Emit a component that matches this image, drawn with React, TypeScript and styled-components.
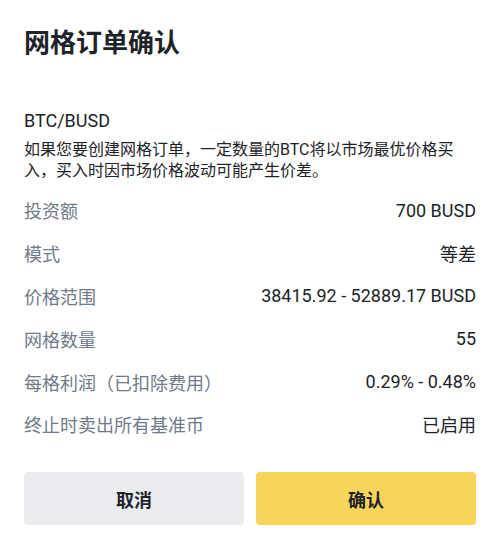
import styled, { createGlobalStyle } from 'styled-components';

const GlobalStyle = createGlobalStyle`
  html, body {
    margin: 0;
    padding: 0;
    background: #ffffff;
  }
  body {
    font-family: Roboto, "Noto Sans CJK SC", "Noto Sans", sans-serif;
    color: #1e2329;
  }
`;

const Panel = styled.div`
  width: 500px;
  height: 549px;
  box-sizing: border-box;
  padding: 24px;
  display: flex;
  flex-direction: column;
`;

const Title = styled.h1`
  margin: 0;
  font-size: 26px;
  line-height: 38px;
  font-weight: 700;
  color: #1e2329;
`;

const Pair = styled.div`
  margin-top: 47px;
  font-size: 18px;
  line-height: 24px;
  color: #1e2329;
`;

const Notice = styled.p`
  margin: 6px 0 0;
  font-size: 16px;
  line-height: 21px;
  color: #1e2329;
`;

const List = styled.div`
  margin-top: 8px;
  display: flex;
  flex-direction: column;
`;

const Row = styled.div`
  height: 42.8px;
  display: flex;
  align-items: center;
  justify-content: space-between;
  font-size: 18px;
`;

const Label = styled.span`
  color: #707a8a;
`;

const Value = styled.span`
  color: #1e2329;
`;

const Actions = styled.div`
  margin-top: auto;
  display: grid;
  grid-template-columns: 1fr 1fr;
  gap: 12px;
`;

const Button = styled.button<{ $primary?: boolean }>`
  height: 53px;
  border: none;
  border-radius: 4px;
  font-family: inherit;
  font-size: 18px;
  font-weight: 700;
  color: #1e2329;
  background: ${(p) => (p.$primary ? '#f8d45b' : '#eaecef')};
  cursor: pointer;
`;

const rows: [string, string][] = [
  ['投资额', '700 BUSD'],
  ['模式', '等差'],
  ['价格范围', '38415.92 - 52889.17 BUSD'],
  ['网格数量', '55'],
  ['每格利润（已扣除费用）', '0.29% - 0.48%'],
  ['终止时卖出所有基准币', '已启用'],
];

export default function App() {
  return (
    <>
      <GlobalStyle />
      <Panel>
        <Title>网格订单确认</Title>
        <Pair>BTC/BUSD</Pair>
        <Notice>
          如果您要创建网格订单，一定数量的BTC将以市场最优价格买入，买入时因市场价格波动可能产生价差。
        </Notice>
        <List>
          {rows.map(([label, value]) => (
            <Row key={label}>
              <Label>{label}</Label>
              <Value>{value}</Value>
            </Row>
          ))}
        </List>
        <Actions>
          <Button>取消</Button>
          <Button $primary>确认</Button>
        </Actions>
      </Panel>
    </>
  );
}
